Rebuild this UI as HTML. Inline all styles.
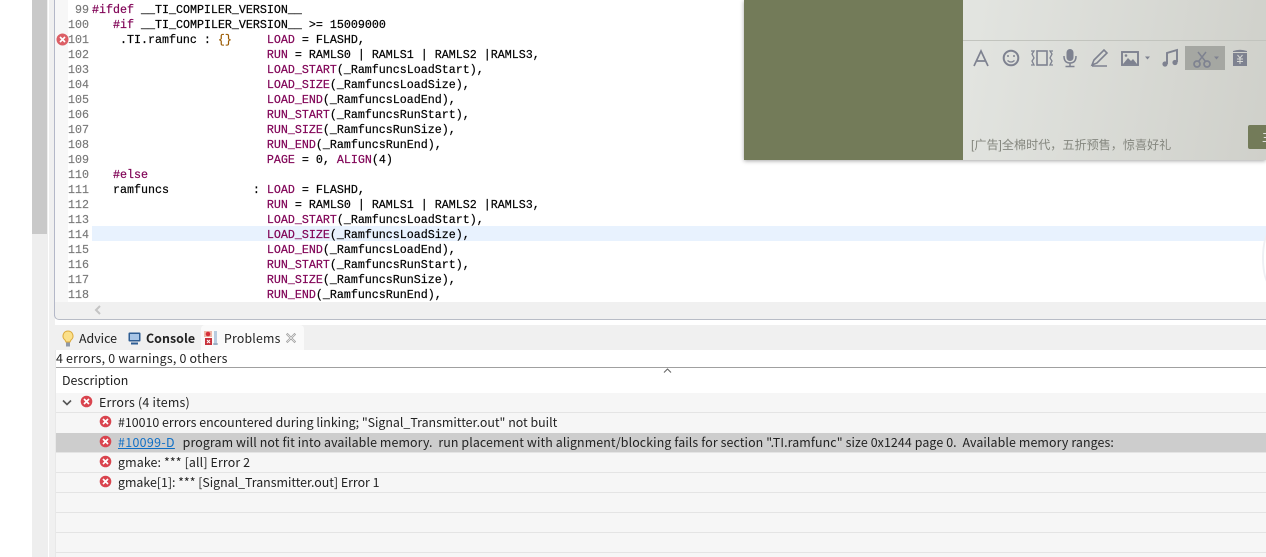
<!DOCTYPE html>
<html><head><meta charset="utf-8">
<style>
html,body{margin:0;padding:0;width:1266px;height:557px;overflow:hidden;background:#fff}
div,span.a{position:absolute}
.l{left:92px;height:15px;margin-top:1px;font:11.67px/15px "Liberation Mono",monospace;white-space:pre;color:#000;-webkit-text-stroke:.2px}
.n{left:62px;width:27px;margin-top:1px;text-align:right;height:15px;font:11.67px/15px "Liberation Mono",monospace;color:#787878;-webkit-text-stroke:.15px}
.k{color:#7f0055}
.o{color:#9a5a00}
.u{font:12.4px/20px "Noto Sans CJK SC","Liberation Sans",sans-serif;color:#222;white-space:pre;margin-top:-1px}
.rowline{left:56px;width:1210px;height:1px;background:#e4e4e4}
.err{width:13px;height:13px}
</style></head><body>
<!-- left strip -->
<div style="left:32px;top:0;width:16px;height:557px;background:#eeeeee"></div>
<div style="left:32px;top:0;width:15px;height:234px;background:#c9c9c9"></div>
<div style="left:49px;top:0;width:6px;height:557px;background:#f0f0f0"></div>
<div style="left:54px;top:0;width:1px;height:316px;background:#b4b8c8"></div>
<div style="left:55px;top:0;width:13px;height:302px;background:#f7f7f7"></div>
<!-- highlight -->
<div style="left:92px;top:226px;width:1174px;height:15px;background:#e8f2fe"></div>
<!-- code -->
<div class="n" style="top:2px">99</div><div class="l" style="top:2px"><span class="k">#ifdef</span> __TI_COMPILER_VERSION__</div>
<div class="n" style="top:17px">100</div><div class="l" style="top:17px">   <span class="k">#if</span> __TI_COMPILER_VERSION__ &gt;= 15009000</div>
<div class="n" style="top:32px">101</div><div class="l" style="top:32px">    .TI.ramfunc : <span class="o">{}</span>     <span class="k">LOAD</span> = FLASHD,</div>
<div class="n" style="top:47px">102</div><div class="l" style="top:47px">                         <span class="k">RUN</span> = RAMLS0 | RAMLS1 | RAMLS2 |RAMLS3,</div>
<div class="n" style="top:62px">103</div><div class="l" style="top:62px">                         <span class="k">LOAD_START</span>(_RamfuncsLoadStart),</div>
<div class="n" style="top:77px">104</div><div class="l" style="top:77px">                         <span class="k">LOAD_SIZE</span>(_RamfuncsLoadSize),</div>
<div class="n" style="top:92px">105</div><div class="l" style="top:92px">                         <span class="k">LOAD_END</span>(_RamfuncsLoadEnd),</div>
<div class="n" style="top:107px">106</div><div class="l" style="top:107px">                         <span class="k">RUN_START</span>(_RamfuncsRunStart),</div>
<div class="n" style="top:122px">107</div><div class="l" style="top:122px">                         <span class="k">RUN_SIZE</span>(_RamfuncsRunSize),</div>
<div class="n" style="top:137px">108</div><div class="l" style="top:137px">                         <span class="k">RUN_END</span>(_RamfuncsRunEnd),</div>
<div class="n" style="top:152px">109</div><div class="l" style="top:152px">                         <span class="k">PAGE</span> = 0, <span class="k">ALIGN</span>(4)</div>
<div class="n" style="top:167px">110</div><div class="l" style="top:167px">   <span class="k">#else</span></div>
<div class="n" style="top:182px">111</div><div class="l" style="top:182px">   ramfuncs            : <span class="k">LOAD</span> = FLASHD,</div>
<div class="n" style="top:197px">112</div><div class="l" style="top:197px">                         <span class="k">RUN</span> = RAMLS0 | RAMLS1 | RAMLS2 |RAMLS3,</div>
<div class="n" style="top:212px">113</div><div class="l" style="top:212px">                         <span class="k">LOAD_START</span>(_RamfuncsLoadStart),</div>
<div class="n" style="top:227px">114</div><div class="l" style="top:227px">                         <span class="k">LOAD_SIZE</span>(_RamfuncsLoadSize),</div>
<div class="n" style="top:242px">115</div><div class="l" style="top:242px">                         <span class="k">LOAD_END</span>(_RamfuncsLoadEnd),</div>
<div class="n" style="top:257px">116</div><div class="l" style="top:257px">                         <span class="k">RUN_START</span>(_RamfuncsRunStart),</div>
<div class="n" style="top:272px">117</div><div class="l" style="top:272px">                         <span class="k">RUN_SIZE</span>(_RamfuncsRunSize),</div>
<div class="n" style="top:287px">118</div><div class="l" style="top:287px">                         <span class="k">RUN_END</span>(_RamfuncsRunEnd),</div>
<!-- error gutter icon -->
<svg style="position:absolute;left:56px;top:33px" width="13" height="13" viewBox="0 0 13 13"><circle cx="6.500" cy="6.500" r="6" fill="#dc5f66"/><path d="M4 4l5 5M9 4l-5 5" stroke="#fff" stroke-width="1.600"/></svg>
<!-- scrollbar bottom -->
<div style="left:55px;top:302px;width:1211px;height:17px;background:#f0f0f0"></div>
<svg style="position:absolute;left:94px;top:305px" width="8" height="10"><path d="M6 1L2 5l4 4" fill="none" stroke="#c4c4c4" stroke-width="2"/></svg>
<div style="left:60px;top:319px;width:1206px;height:1px;background:#b8bcc6"></div>
<div style="left:54px;top:314px;width:6px;height:5px;border-left:1px solid #b4b8c8;border-bottom:1px solid #b8bcc6;border-radius:0 0 0 5px;background:#f0f0f0"></div>
<!-- chat overlay -->
<div style="left:744px;top:0;width:522px;height:160px;box-shadow:0 1px 4px rgba(0,0,0,.35);background:#d8dad5"></div>
<div style="left:963px;top:0;width:303px;height:160px;background:linear-gradient(100deg,#e3e5e1 0,#cfd0ca 100%)"></div>
<div style="left:744px;top:0;width:219px;height:160px;background:#737b59"></div>
<div style="left:963px;top:40px;width:303px;height:1px;background:#c2c4be"></div>
<div style="left:1185px;top:46px;width:40px;height:24px;background:#a5a7a2"></div>
<svg style="position:absolute;left:963px;top:40px" width="303" height="40" viewBox="0 0 303 40" fill="none" stroke="#7e8290" stroke-width="2">
<path d="M11 26L18 11l7 15M13.500 21h9" stroke-width="1.700"/>
<circle cx="48" cy="18" r="7.300"/><circle cx="45" cy="16" r="1" fill="#7e8290" stroke="none"/><circle cx="51" cy="16" r="1" fill="#7e8290" stroke="none"/><path d="M44.500 20.500q3.500 3 7 0" stroke-width="1.300"/>
<rect x="74" y="11" width="10" height="14" stroke-width="1.600"/><path d="M68 11h3l-2 3 2 4-2 3 2 4h-3M90 11h-3l2 3-2 4 2 3-2 4h3" stroke-width="1.300"/>
<rect x="103.500" y="9" width="7" height="12" rx="3.500" fill="#7e8290" stroke="none"/><path d="M101 16q0 7 6 7t6-7M107 23v3M102.500 26.500h9" stroke-width="1.500"/>
<path d="M129 25l2-5 10-10 3 3-10 10zM129 26h15" stroke-width="1.600"/>
<rect x="159" y="12" width="16" height="13" stroke-width="1.900"/><path d="M160 24l5-6 3 3 2-2 4 5z" fill="#7e8290" stroke="none"/><circle cx="163" cy="15.500" r="1.300" fill="#7e8290" stroke="none"/>
<path d="M182 16.500h5l-2.500 3z" fill="#7e8290" stroke="none"/>
<path d="M204 24V13l10-3v12" stroke-width="1.900"/><circle cx="202" cy="24" r="2.600" fill="#7e8290" stroke="none"/><circle cx="212" cy="22.500" r="2.600" fill="#7e8290" stroke="none"/>
<circle cx="234" cy="24" r="3" stroke-width="1.700"/><circle cx="244" cy="24" r="3" stroke-width="1.700"/><path d="M235.500 21.500L243 12M242.500 21.500L235 12" stroke-width="1.500"/>
<path d="M251 16.500h5l-2.500 3z" fill="#7e8290" stroke="none"/>
<rect x="270" y="13" width="14" height="13" fill="#7e8290" stroke="none"/><path d="M270 11q7-2.500 14 0v1h-14z" fill="#7e8290" stroke="none"/><path d="M274.500 15l2.500 3 2.500-3M274 19h6M274 21.500h6M277 18v6" stroke="#d8d9d5" stroke-width="1"/>
</svg>
<div style="left:971px;top:136px;font:12.1px/18px 'Liberation Sans','Noto Sans CJK SC',sans-serif;color:#85877f;white-space:pre">[广告]全棉时代，五折预售，惊喜好礼</div>
<div style="left:1248px;top:125px;width:18px;height:24px;background:#737b59;border-radius:2px 0 0 2px;overflow:hidden;font:12px/24px 'Noto Sans CJK SC',sans-serif;color:#eee;text-indent:14px">主</div>
<div style="left:1262px;top:231px;width:12px;height:50px;border:2px solid #eef0f4;border-radius:50%;background:#fff"></div>
<!-- tab bar -->
<div style="left:55px;top:320px;width:1211px;height:5px;background:#fff"></div>
<div style="left:55px;top:325px;width:1211px;height:25px;background:#f0f0f0"></div>
<div style="left:201px;top:325px;width:103px;height:25px;background:#fafafa;border-radius:4px 4px 0 0"></div>
<svg style="position:absolute;left:61px;top:330px" width="14" height="18" viewBox="0 0 14 18"><path d="M7 1a5 5 0 0 0-3 9l1 2h4l1-2a5 5 0 0 0-3-9z" fill="#fbe08a" stroke="#dca93a"/><rect x="5" y="12.500" width="4" height="4" fill="#8e98a8"/></svg>
<div class="u" style="left:79px;top:329px;font-size:12.400px">Advice</div>
<svg style="position:absolute;left:128px;top:332px" width="13" height="13" viewBox="0 0 13 13"><rect x=".5" y=".5" width="12" height="9" rx="1" fill="#2e5d93"/><rect x="2" y="2" width="9" height="6" fill="#a8c5e6"/><rect x="3" y="10.500" width="7" height="2" fill="#2e5d93"/></svg>
<div class="u" style="left:146px;top:329px;font-weight:700;font-size:12.400px;letter-spacing:.05px">Console</div>
<svg style="position:absolute;left:204px;top:330px" width="15" height="16" viewBox="0 0 15 16"><rect x="0" y="1" width="8" height="6" fill="#f0b8a8"/><circle cx="4" cy="4" r="2.300" fill="#d6303a"/><rect x="1" y="8" width="7" height="7" fill="#c8323c"/><path d="M3 10l3 3M6 10l-3 3" stroke="#fff"/><path d="M10 1h3v14h-3z" fill="#b8cce0"/><path d="M9 14h5" stroke="#7a90a8"/></svg>
<div class="u" style="left:224px;top:329px;font-size:12.300px;letter-spacing:.2px">Problems</div>
<svg style="position:absolute;left:285px;top:332px" width="12" height="12" viewBox="0 0 12 12"><path d="M1.500 2.500l1-1L6 5l3.500-3.500 1 1L7 6l3.500 3.500-1 1L6 7l-3.500 3.500-1-1L5 6z" fill="#fff" stroke="#a0a0a0" stroke-width=".8"/></svg>
<!-- problems -->
<div style="left:55px;top:350px;width:1px;height:207px;background:#e8e8e8"></div>
<div class="u" style="left:56px;top:349px;letter-spacing:.2px">4 errors, 0 warnings, 0 others</div>
<div style="left:56px;top:367px;width:1210px;height:1px;background:#a0a0a0"></div>
<svg style="position:absolute;left:663px;top:368px" width="9" height="6"><path d="M1 4.500L4.500 1 8 4.500" fill="none" stroke="#666" stroke-width="1.100"/></svg>
<div class="u" style="left:62px;top:371px">Description</div>
<div style="left:56px;top:393px;width:1210px;height:164px;background:#f6f6f6"></div>
<svg style="position:absolute;left:62px;top:399px" width="10" height="8"><path d="M1 1.500l4 4 4-4" fill="none" stroke="#555" stroke-width="1.600"/></svg>
<svg class="err" style="position:absolute;left:80px;top:395px" viewBox="0 0 13 13"><circle cx="6.500" cy="6.500" r="5.800" fill="#d9444e"/><path d="M4 4l5 5M9 4l-5 5" stroke="#fff" stroke-width="1.700"/></svg>
<div class="u" style="left:99px;top:393px;letter-spacing:.2px">Errors (4 items)</div>
<div class="rowline" style="top:412px"></div>
<svg class="err" style="position:absolute;left:99px;top:415px" viewBox="0 0 13 13"><circle cx="6.500" cy="6.500" r="5.800" fill="#d9444e"/><path d="M4 4l5 5M9 4l-5 5" stroke="#fff" stroke-width="1.700"/></svg>
<div class="u" style="left:118px;top:413px;letter-spacing:0">#10010 errors encountered during linking; "Signal_Transmitter.out" not built</div>
<div style="left:56px;top:433px;width:1210px;height:19px;background:#cdcdcd"></div>
<svg class="err" style="position:absolute;left:99px;top:435px" viewBox="0 0 13 13"><circle cx="6.500" cy="6.500" r="5.800" fill="#d9444e"/><path d="M4 4l5 5M9 4l-5 5" stroke="#fff" stroke-width="1.700"/></svg>
<div class="u" style="left:118px;top:433px;letter-spacing:.106px"><span style="color:#0f6fc6;text-decoration:underline;letter-spacing:.35px;margin-right:2px">#10099-D</span>  program will not fit into available memory.  run placement with alignment/blocking fails for section ".TI.ramfunc" size 0x1244 page 0.  Available memory ranges:</div>
<div class="rowline" style="top:452px"></div>
<svg class="err" style="position:absolute;left:99px;top:455px" viewBox="0 0 13 13"><circle cx="6.500" cy="6.500" r="5.800" fill="#d9444e"/><path d="M4 4l5 5M9 4l-5 5" stroke="#fff" stroke-width="1.700"/></svg>
<div class="u" style="left:118px;top:453px;letter-spacing:.125px">gmake: *** [all] Error 2</div>
<div class="rowline" style="top:472px"></div>
<svg class="err" style="position:absolute;left:99px;top:475px" viewBox="0 0 13 13"><circle cx="6.500" cy="6.500" r="5.800" fill="#d9444e"/><path d="M4 4l5 5M9 4l-5 5" stroke="#fff" stroke-width="1.700"/></svg>
<div class="u" style="left:118px;top:473px;letter-spacing:-.02px">gmake[1]: *** [Signal_Transmitter.out] Error 1</div>
<div class="rowline" style="top:492px"></div>
<div class="rowline" style="top:512px"></div>
<div class="rowline" style="top:532px"></div>
<div class="rowline" style="top:552px"></div>
</body></html>
